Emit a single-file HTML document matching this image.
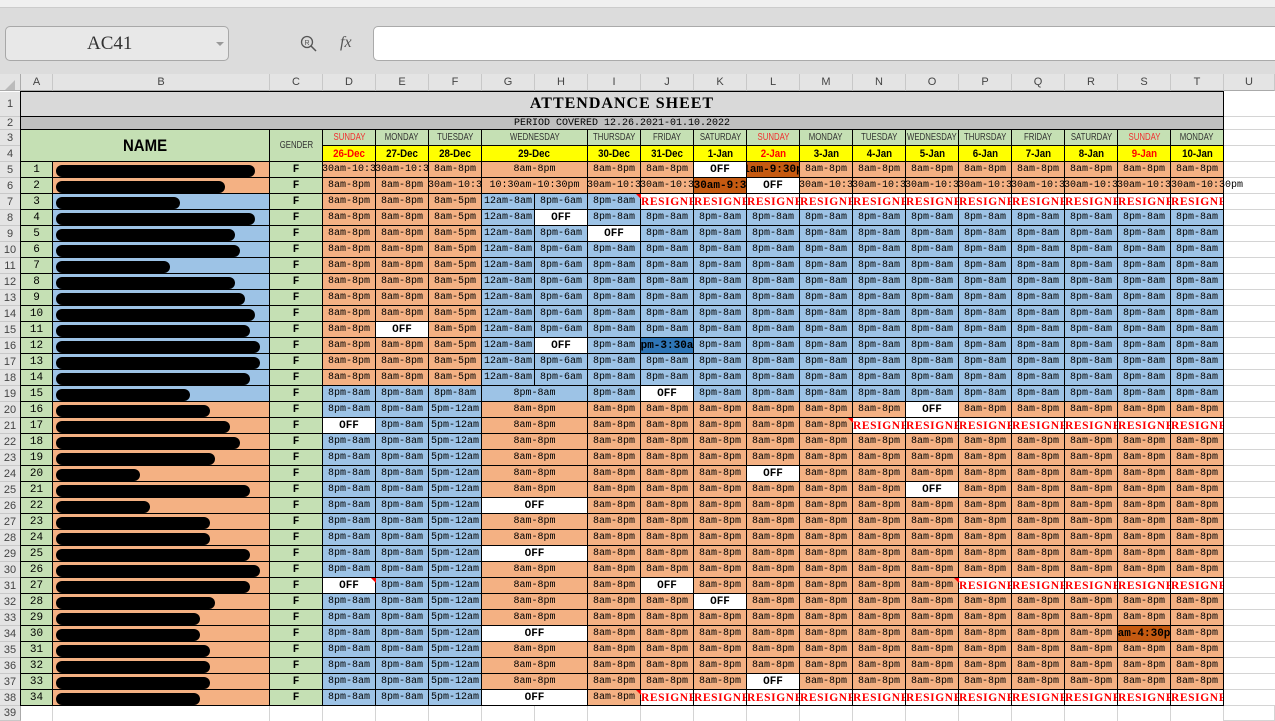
<!DOCTYPE html>
<html><head><meta charset="utf-8">
<style>
*{margin:0;padding:0;box-sizing:border-box}
body{width:1275px;height:721px;overflow:hidden;background:#fff;position:relative;font-family:"Liberation Sans",sans-serif}
.a{position:absolute}
.c{position:absolute;border:1px solid #000;display:flex;align-items:center;justify-content:center;overflow:hidden;white-space:nowrap;font-family:"Liberation Mono",monospace;font-size:10px;color:#000}
.o{background:#f4b183}.b{background:#9dc3e6}.g{background:#c5e0b4}.w{background:#fff}.y{background:#ffff00}
.off{background:#fff;font-weight:bold;font-size:11px}
.res{background:#fff;color:#f00;font-weight:bold;font-size:11.5px;justify-content:flex-start;font-family:"Liberation Serif",serif;letter-spacing:0.6px}
.dk{background:#c55a11;font-weight:bold;font-size:11px}
.db{background:#2e75b6;font-weight:bold;font-size:11px}
.day{font-family:"Liberation Sans",sans-serif;font-size:10px;color:#333}
.dt{font-family:"Liberation Sans",sans-serif;font-size:11px;font-weight:bold}
.sq{display:inline-block;transform:scaleX(.78)}
.sq2{display:inline-block;transform:scaleX(.88)}
.hd{position:absolute;top:74px;height:17px;border-right:1px solid #c8c8c8;border-bottom:1px solid #aaa;background:#e4e4e4;font-size:11px;color:#444;display:flex;align-items:center;justify-content:center}
.rh{position:absolute;left:0;width:21px;border-bottom:1px solid #c8c8c8;border-right:1px solid #aaa;background:#e4e4e4;font-size:11px;color:#444;display:flex;align-items:center;justify-content:center}
.tri{position:absolute;width:0;height:0;border-top:5px solid #f00;border-left:5px solid transparent}
.nm{position:absolute;height:12px;background:#000;border-radius:6px}
</style></head><body>
<div class="a" style="left:0;top:0;width:1275px;height:8px;background:#f0f0f0;border-bottom:1px solid #ccc"></div>
<div class="a" style="left:0;top:8px;width:1275px;height:66px;background:#dcdcdc"></div>
<div class="a" style="left:5px;top:26px;width:224px;height:35px;background:#e8e8e8;border:1px solid #a8a8a8;border-radius:5px;font-family:'Liberation Serif',serif;font-size:19px;color:#333;display:flex;align-items:center;padding-left:81px">AC41</div>
<div class="a" style="left:216px;top:42px;width:0;height:0;border-left:4px solid transparent;border-right:4px solid transparent;border-top:4px solid #999"></div>
<svg class="a" style="left:300px;top:35px" width="18" height="18" viewBox="0 0 18 18"><circle cx="7" cy="7" r="5.5" fill="none" stroke="#555" stroke-width="1.3"/><line x1="11" y1="11" x2="16" y2="16" stroke="#555" stroke-width="1.5"/><text x="4.5" y="10" font-size="7" fill="#555" font-family="Liberation Sans">R</text></svg>
<div class="a" style="left:340px;top:34px;font-family:'Liberation Serif',serif;font-style:italic;font-size:16px;color:#555">fx</div>
<div class="a" style="left:373px;top:26px;width:910px;height:35px;background:#fff;border:1px solid #aaa;border-radius:5px"></div>
<div class="a" style="left:0;top:74px;width:21px;height:17px;background:#e4e4e4;border-right:1px solid #aaa;border-bottom:1px solid #aaa"></div>
<div class="a" style="left:5px;top:80px;width:0;height:0;border-left:10px solid transparent;border-bottom:10px solid #bbb"></div>
<div id="g"></div>
<script>
(function(){
var X=[21,53,270,323,376,429,482,535,588,641,694,747,800,853,906,959,1012,1065,1118,1171,1224,1275];
var L="ABCDEFGHIJKLMNOPQRSTU";
function rt(r){if(r==1)return 92;if(r==2)return 117;if(r==3)return 130;if(r==4)return 146;return 162+(r-5)*16;}
function rb(r){return r==39?721:rt(r+1);}
var h='';
for(var i=0;i<21;i++)h+='<div class="hd" style="left:'+X[i]+'px;width:'+(X[i+1]-X[i])+'px">'+L[i]+'</div>';
for(var r=1;r<=39;r++)h+='<div class="rh" style="top:'+rt(r)+'px;height:'+(rb(r)-rt(r))+'px">'+r+'</div>';
for(var r=1;r<=39;r++)h+='<div class="a" style="left:1224px;top:'+(rb(r)-1)+'px;width:51px;height:1px;background:#d4d4d4"></div>';
for(var i=0;i<21;i++)h+='<div class="a" style="left:'+(X[i+1]-1)+'px;top:706px;width:1px;height:15px;background:#d4d4d4"></div>';
function cell(c1,c2,r1,r2,cls,txt,st){
 var x=X[c1],y=rt(r1),w=X[c2+1]-x,hh=rb(r2)-y;
 if(cls.indexOf('day')>=0)txt='<span class="sq">'+txt+'</span>';
 else if(cls.indexOf('dt')>=0||cls.indexOf('nmh')>=0)txt='<span class="sq2">'+txt+'</span>';
 h+='<div class="c '+cls+'" style="left:'+(x-1)+'px;top:'+(y-1)+'px;width:'+(w+1)+'px;height:'+(hh+1)+'px;'+(st||'')+'">'+(txt||'')+'</div>';
}
cell(0,19,1,1,'','ATTENDANCE SHEET','background:#d9d9d9;font-size:16px;font-weight:bold;letter-spacing:1px;font-family:\'Liberation Serif\',serif');
cell(0,19,2,2,'','PERIOD COVERED 12.26.2021-01.10.2022','background:#bfbfbf;font-size:10px');
cell(0,1,3,4,'g nmh','NAME','font-family:\'Liberation Sans\',sans-serif;font-size:17px;font-weight:bold');
cell(2,2,3,4,'g day','GENDER','');
var days=['SUNDAY','MONDAY','TUESDAY','WEDNESDAY','THURSDAY','FRIDAY','SATURDAY','SUNDAY','MONDAY','TUESDAY','WEDNESDAY','THURSDAY','FRIDAY','SATURDAY','SUNDAY','MONDAY'];
var dts=['26-Dec','27-Dec','28-Dec','29-Dec','30-Dec','31-Dec','1-Jan','2-Jan','3-Jan','4-Jan','5-Jan','6-Jan','7-Jan','8-Jan','9-Jan','10-Jan'];
var cols=[[3,3],[4,4],[5,5],[6,7],[8,8],[9,9],[10,10],[11,11],[12,12],[13,13],[14,14],[15,15],[16,16],[17,17],[18,18],[19,19]];
for(var k=0;k<16;k++){var red=days[k]=='SUNDAY';
 cell(cols[k][0],cols[k][1],3,3,'g day',days[k],red?'color:#f03030':'');
 cell(cols[k][0],cols[k][1],4,4,'y dt',dts[k],red?'color:#f00':'');}
var widths={5:255,6:225,7:180,8:255,9:235,10:240,11:170,12:235,13:245,14:255,15:250,16:260,17:260,18:250,19:190,20:210,21:230,22:240,23:215,24:140,25:250,26:150,27:210,28:210,29:250,30:260,31:250,32:215,33:200,34:200,35:210,36:210,37:210,38:200};
var O='o|8am-8pm',B='b|8pm-8am',F='off|OFF',R='res|RESIGNED';
for(var r=5;r<=38;r++){
 cell(0,0,r,r,'g',String(r-4),'font-size:11px');
 cell(1,1,r,r,(r>=7&&r<=19)?'b':'o','');
 cell(2,2,r,r,'g','F','font-weight:bold;font-size:11px');
 var row;
 if(r==5){row=['o|10:30am-10:30pm','o|10:30am-10:30pm',O,O,O,O,F,'dk|11am-9:30pm',O,O,O,O,O,O,O,O];}
 else if(r==6){var t='o|10:30am-10:30pm';row=[O,O,t,t,t,t,'dk|10:30am-9:30pm',F,t,t,t,t,t,t,t,'o|30am-10:30pm'];}
 else if(r<=18){row=[O,O,'o|8am-5pm',null,B,B,B,B,B,B,B,B,B,B,B,B];}
 else if(r==19){row=[B,B,B,B,B,F,B,B,B,B,B,B,B,B,B,B];}
 else {row=[B,B,'b|5pm-12am',O,O,O,O,O,O,O,O,O,O,O,O,O];}
 if(r>=7&&r<=18){
  var Hh=(r==8||r==16)?F:'b|8pm-6am';
  var full=[row[0],row[1],row[2],'b|12am-8am',Hh].concat(row.slice(4));
  if(r==7){for(var j=6;j<17;j++)full[j]=R;}
  if(r==9)full[5]=F;
  if(r==15)full[1]=F;
  if(r==16)full[6]='db|7pm-3:30am';
  for(var j=0;j<17;j++){var p=full[j].split('|');cell(3+j,3+j,r,r,p[0],p[1]);}
  continue;
 }
 if(r==20)row[10]=F;
 if(r==21){row[0]=F;for(var j=9;j<16;j++)row[j]=R;}
 if(r==24)row[7]=F;
 if(r==25)row[10]=F;
 if(r==26||r==29||r==34||r==38)row[3]=F;
 if(r==31){row[0]=F;row[5]=F;for(var j=11;j<16;j++)row[j]=R;}
 if(r==32)row[6]=F;
 if(r==34)row[14]='dk|8am-4:30pm';
 if(r==37)row[7]=F;
 if(r==38){for(var j=5;j<16;j++)row[j]=R;}
 for(var k=0;k<16;k++){var p=row[k].split('|');cell(cols[k][0],cols[k][1],r,r,p[0],p[1],(r==6&&k==15)?'justify-content:flex-start;overflow:visible':'');}
}
for(var r=5;r<=38;r++){h+='<div class="nm" style="left:56px;top:'+(rt(r)+3)+'px;width:'+(widths[r]-56)+'px"></div>';}
[[8,7],[12,21],[3,31],[14,31],[8,38]].forEach(function(t){h+='<div class="tri" style="left:'+(X[t[0]+1]-5)+'px;top:'+rt(t[1])+'px"></div>';});
document.getElementById('g').innerHTML=h;
})();
</script>
</body></html>
